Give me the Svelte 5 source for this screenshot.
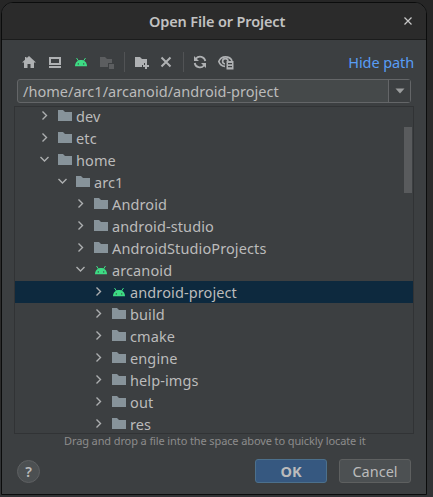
<script>
  const rows = [
    { name: 'dev', level: 0 },
    { name: 'etc', level: 0 },
    { name: 'home', level: 0, open: true },
    { name: 'arc1', level: 1, open: true },
    { name: 'Android', level: 2 },
    { name: 'android-studio', level: 2 },
    { name: 'AndroidStudioProjects', level: 2 },
    { name: 'arcanoid', level: 2, open: true, android: true },
    { name: 'android-project', level: 3, android: true, selected: true },
    { name: 'build', level: 3 },
    { name: 'cmake', level: 3 },
    { name: 'engine', level: 3 },
    { name: 'help-imgs', level: 3 },
    { name: 'out', level: 3 },
    { name: 'res', level: 3 }
  ];
</script>

{#snippet droid()}
  <svg class="icon" width="16" height="16" viewBox="0 0 16 16">
    <path d="M3.500 4l2 3M12.500 4l-2 3" stroke="#3ddc84" stroke-width="1" />
    <path d="M2 12.200C2 8.500 4.600 6 8 6s6 2.500 6 6.200z" fill="#3ddc84" />
    <circle cx="5.300" cy="9.900" r=".7" fill="#3c3f41" />
    <circle cx="10.700" cy="9.900" r=".7" fill="#3c3f41" />
  </svg>
{/snippet}

<div class="screen">
  <div class="dialog">
    <header>
      <span class="title">Open File or Project</span>
      <svg class="close" width="10" height="10" viewBox="0 0 10 10"><path d="M1.500 1.500l7 7M8.500 1.500l-7 7" stroke="#c9c9c9" stroke-width="1.200" /></svg>
    </header>
    <div class="body">
      <div class="toolbar">
        <svg class="icon" width="16" height="16" viewBox="0 0 16 16"><path d="M8 2l7 6.500h-2V14H9.500v-4h-3v4H3V8.500H1L4 5.700V3h1.500v1.300z" fill="#afb1b3" /></svg>
        <svg class="icon" width="16" height="16" viewBox="0 0 16 16"><path fill-rule="evenodd" d="M2 3h12v8H2zM4 5v4h8V5zM2 12h12v2H2z" fill="#afb1b3" /></svg>
        {@render droid()}
        <svg class="icon" width="16" height="16" viewBox="0 0 16 16"><path d="M1 3h5l2 2h5v4H9v4H1zM10 10h5v5h-5z" fill="#5c5e60" /></svg>
        <i class="sep"></i>
        <svg class="icon tight" width="16" height="16" viewBox="0 0 16 16"><path d="M1 3h5l2 2h5v4h-3v2H8v2H1zM11 9h2v2h2v2h-2v2h-2v-2H9v-2h2z" fill="#afb1b3" /></svg>
        <svg class="icon" width="16" height="16" viewBox="0 0 16 16"><path d="M3.500 3.500l9 9M12.500 3.500l-9 9" stroke="#afb1b3" stroke-width="2" /></svg>
        <i class="sep near"></i>
        <svg class="icon" width="16" height="16" viewBox="0 0 16 16"><path d="M13.300 7A5.300 5.300 0 0 0 4 4.500L3 5.500M2.700 9a5.300 5.300 0 0 0 9.300 2.500l1-1" fill="none" stroke="#afb1b3" stroke-width="1.800" /><path d="M2 2v5h5zM14 14V9H9z" fill="#afb1b3" /></svg>
        <svg class="icon" width="16" height="16" viewBox="0 0 16 16"><path d="M7 12.400C4 12.200 1.700 10 .8 7.500 2 4.500 4.600 2.800 7.500 2.800s5.400 1.400 6.600 4" fill="none" stroke="#afb1b3" stroke-width="1.700" /><path d="M10 7.200A2.700 2.700 0 1 0 7 10" fill="none" stroke="#afb1b3" stroke-width="1.700" /><path fill-rule="evenodd" d="M8.500 7H15.500v8.500H8.500zM10 9v1.200h4V9zM10 12v1.200h4V12z" fill="#afb1b3" /></svg>
        <span class="link">Hide path</span>
      </div>
      <div class="path">
        <span class="value">/home/arc1/arcanoid/android-project</span>
        <span class="drop"><svg width="10" height="6" viewBox="0 0 10 6"><path d="M.5.500h9L5 5.500z" fill="#9b9d9e" /></svg></span>
      </div>
      <div class="tree">
        <div class="rows">
          {#each rows as row}
            <div class="row" class:selected={row.selected} style="padding-left: {21 + row.level * 18}px">
              <svg class="icon" width="16" height="16" viewBox="0 0 16 16">
                <path d={row.open ? 'M4.500 5l4 4 4-4' : 'M6.500 3.500L10.500 7.500l-4 4'} fill="none" stroke="#adafb0" stroke-width="1.400" />
              </svg>
              {#if row.android}
                {@render droid()}
              {:else}
                <svg class="icon" width="16" height="16" viewBox="0 0 16 16"><path d="M1 2h5l2 2h7v9H1z" fill="#87939a" /></svg>
              {/if}
              <span class="name">{row.name}</span>
            </div>
          {/each}
        </div>
        <div class="thumb"></div>
      </div>
      <div class="hint"><span>Drag and drop a file into the space above to quickly locate it</span></div>
      <footer>
        <span class="help">?</span>
        <button class="primary">OK</button>
        <button>Cancel</button>
      </footer>
    </div>
  </div>
</div>

<style>
  .screen {
    box-sizing: border-box;
    width: 433px;
    height: 497px;
    padding: 2px 6px 2px 1px;
    overflow: hidden;
    background: linear-gradient(#262626 0 90px, #2b2b2b 90px 420px, #313335 420px);
    font-family: "Noto Sans", sans-serif;
    font-size: 14.500px;
    color: #bbb;
  }
  .dialog {
    box-sizing: border-box;
    height: 493px;
    border: 1px solid #0b0c0c;
    border-radius: 12px 12px 0 0;
    overflow: hidden;
    background: #3c3f41;
  }
  header {
    box-sizing: border-box;
    height: 37px;
    display: flex;
    align-items: center;
    padding: 0 13px 0 147px;
    background: #2b2b2b;
    border-bottom: 1px solid #1b1c1c;
  }
  .title { flex: 1; font-weight: 600; letter-spacing: -.13px; white-space: nowrap; color: #c2c2c2; }
  svg { display: block; flex: none; }
  .body { padding: 0 12px; }
  .toolbar { display: flex; align-items: center; height: 39px; padding: 5px 0 0 7px; box-sizing: border-box; }
  .toolbar .icon { margin-right: 10px; }
  .toolbar .tight { margin-right: 8px; }
  .sep { width: 1px; height: 20px; margin: 0 9px 0 -1px; background: #515355; }
  .near { margin-right: 8px; }
  .link { margin-left: auto; letter-spacing: -.1px; color: #589df6; }
  .path {
    box-sizing: border-box;
    display: flex;
    height: 24px;
    margin: 0 3px;
    border: 1px solid #646668;
    border-radius: 3px;
    background: #45494a;
  }
  .value { flex: 1; padding-left: 5px; line-height: 22px; letter-spacing: .03px; white-space: nowrap; }
  .drop { width: 21px; display: flex; align-items: center; justify-content: center; border-left: 1px solid #646668; background: #3c3f41; }
  .tree {
    position: relative;
    box-sizing: border-box;
    height: 328px;
    margin-top: 3px;
    border: 1px solid #313335;
    overflow: hidden;
  }
  .rows { margin-top: -2px; }
  .row { display: flex; align-items: center; height: 22px; }
  .row .icon + .icon { margin-left: 5px; }
  .name { margin-left: 3px; letter-spacing: .11px; white-space: nowrap; }
  .selected { background: #0d293e; }
  .thumb { position: absolute; right: 1px; top: 20px; width: 8px; height: 66px; background: #595b5d; }
  .hint { height: 15px; padding-left: 50px; font-size: 11px; line-height: 13px; letter-spacing: -.11px; white-space: nowrap; color: #8c8c8c; }
  footer { display: flex; align-items: center; gap: 12px; padding: 10px 3px 0; }
  .help {
    box-sizing: border-box;
    width: 23px;
    height: 23px;
    margin-right: auto;
    border: 1px solid #5e6062;
    border-radius: 50%;
    background: #4c5052;
    font-weight: 600;
    line-height: 21px;
    text-align: center;
  }
  button {
    box-sizing: border-box;
    width: 72px;
    height: 24px;
    padding: 0;
    border: 1px solid #5e6060;
    border-radius: 3px;
    background: #4c5052;
    color: #bbb;
    font: inherit;
    line-height: 20px;
  }
  .primary { background: #365880; border-color: #4c708c; font-weight: 700; }
</style>
